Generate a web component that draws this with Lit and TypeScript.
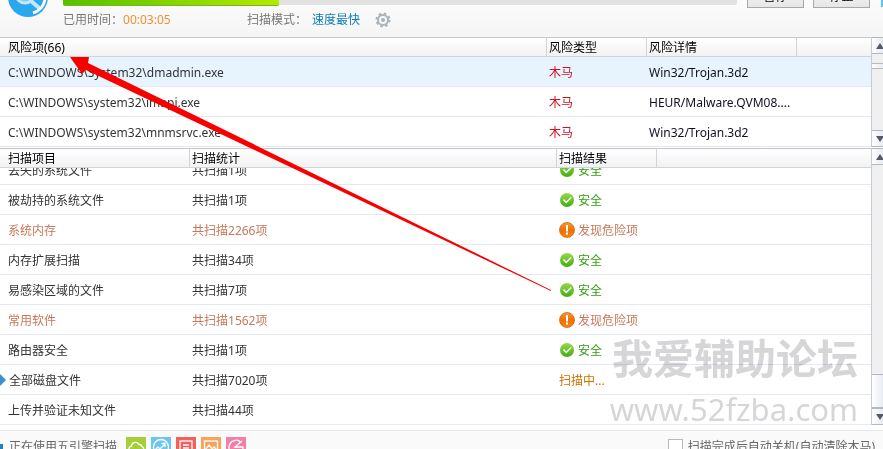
import { LitElement, html, svg, css, nothing } from "lit";
import { customElement, property } from "lit/decorators.js";
import { classMap } from "lit/directives/class-map.js";

type Result = "safe" | "danger" | "scanning";

interface Risk {
  path: string;
  kind: string;
  detail: string;
}

interface ScanItem {
  name: string;
  count: number;
  result?: Result;
}

const RISKS: Risk[] = [
  { path: "C:\\WINDOWS\\System32\\dmadmin.exe", kind: "木马", detail: "Win32/Trojan.3d2" },
  { path: "C:\\WINDOWS\\system32\\imapi.exe", kind: "木马", detail: "HEUR/Malware.QVM08...." },
  { path: "C:\\WINDOWS\\system32\\mnmsrvc.exe", kind: "木马", detail: "Win32/Trojan.3d2" },
];

const ITEMS: ScanItem[] = [
  { name: "丢失的系统文件", count: 1, result: "safe" },
  { name: "被劫持的系统文件", count: 1, result: "safe" },
  { name: "系统内存", count: 2266, result: "danger" },
  { name: "内存扩展扫描", count: 34, result: "safe" },
  { name: "易感染区域的文件", count: 7, result: "safe" },
  { name: "常用软件", count: 1562, result: "danger" },
  { name: "路由器安全", count: 1, result: "safe" },
  { name: "全部磁盘文件", count: 7020, result: "scanning" },
  { name: "上传并验证未知文件", count: 44 },
];

const ENGINES = [
  { color: "#a6ce39", glyph: svg`<path d="M5 16h10a3.500 3.500 0 0 0 1-6.500 3 3 0 0 0-3-2 4 4 0 0 0-7.500 1.500A3.700 3.700 0 0 0 5 16z"/>` },
  { color: "#6cc5f0", glyph: svg`<circle cx="10" cy="10" r="7.500"/><path d="M4 13l3-3 2 2 5-5M10.500 6.500H14V10"/>` },
  { color: "#f25f5c", glyph: svg`<rect x="4" y="4" width="12" height="13"/><path d="M7 8h6M7 11h6"/>` },
  { color: "#f7a35c", glyph: svg`<rect x="3.500" y="4" width="13" height="13"/><path d="M4 13l4-5 3 4 2-2 3 3"/>` },
  { color: "#f080a8", glyph: svg`<path d="M14 4.500A7 7 0 1 0 17 10H9L16 4"/>` },
];

const safeIcon = html`<svg class="mark" width="16" height="16" viewBox="0 0 16 16" aria-hidden="true">
  <defs>
    <linearGradient id="g" x1="0" y1="0" x2="0" y2="1"><stop offset="0" stop-color="#9bd84a" /><stop offset="1" stop-color="#3fae12" /></linearGradient>
  </defs>
  <circle cx="8" cy="8" r="7" fill="url(#g)" />
  <path d="M4.500 7.500l2.700 3 5-5" fill="none" stroke="#fff" stroke-width="1.500" />
</svg>`;

const dangerIcon = html`<svg class="mark" width="16" height="16" viewBox="0 0 16 16" aria-hidden="true">
  <defs>
    <linearGradient id="o" x1="0" y1="0" x2="0" y2="1"><stop offset="0" stop-color="#f59a3a" /><stop offset="0.500" stop-color="#ef7000" /><stop offset="1" stop-color="#f58a14" /></linearGradient>
  </defs>
  <circle cx="8" cy="8" r="7.500" fill="url(#o)" stroke="#d0660c" stroke-width="0.800" />
  <path d="M7 3h2v6.500H7zM7 10.500h2v2H7z" fill="#fff" />
</svg>`;

const font = css`
  "Noto Sans", "Noto Sans CJK SC", sans-serif
`;

@customElement("scroll-bar")
class ScrollBar extends LitElement {
  @property({ type: Boolean }) bottom = false;

  static styles = css`
    :host {
      display: flex;
      flex-direction: column;
      box-sizing: border-box;
      flex: none;
      width: 12px;
      overflow: hidden;
      background: #f0f0f0;
      border-left: 1px solid #c8ccd2;
    }
    .step {
      display: flex;
      justify-content: center;
      align-items: center;
      box-sizing: border-box;
      flex: none;
      width: 17px;
      height: 17px;
      padding: 0;
      border: 1px solid #b4b8bd;
      border-left: 0;
      background: linear-gradient(90deg, #fff, #dde2ec);
    }
    .gap {
      height: 9px;
    }
    .space {
      flex: 1;
    }
    .thumb {
      box-sizing: border-box;
      width: 17px;
      height: 6px;
      border: 1px solid #b4b8bd;
      border-left: 0;
      background: linear-gradient(90deg, #fff, #dde2ec);
    }
    .tall {
      height: 34px;
    }
  `;

  render() {
    const tall = this.bottom;
    return html`
      <button class="step" aria-label="向上滚动">
        <svg width="8" height="6" viewBox="0 0 8 6"><path d="M4 0l4 6H0z" fill="#555a66" /></svg>
      </button>
      <div class=${tall ? "space" : "gap"}></div>
      <div class=${classMap({ thumb: true, tall })}></div>
      ${tall ? nothing : html`<div class="space"></div>`}
      <button class="step" aria-label="向下滚动">
        <svg width="8" height="6" viewBox="0 0 8 6"><path d="M0 0h8L4 6z" fill="#555a66" /></svg>
      </button>
    `;
  }
}

@customElement("app-root")
class AppRoot extends LitElement {
  static styles = css`
    :host {
      display: flex;
      flex-direction: column;
      position: relative;
      height: 100vh;
      overflow: hidden;
      background: #fff;
      color: #333;
      font: 12px/18px ${font};
    }
    button,
    input {
      font: inherit;
    }
    .top {
      display: flex;
      align-items: flex-end;
      flex: none;
      box-sizing: border-box;
      height: 37px;
      background: linear-gradient(#fbfbfb, #f5f5f5);
    }
    .logo {
      flex: none;
      width: 40px;
      height: 40px;
      margin: 0 15px 20px 8px;
    }
    .progress {
      flex: 1;
      padding-bottom: 8px;
    }
    .track {
      height: 20px;
      margin-bottom: 6px;
      border-radius: 2px;
      background: #e1e1e1;
    }
    .fill {
      box-sizing: border-box;
      height: 21px;
      border-bottom: 1px solid #7db41c;
      border-radius: 2px;
      background: linear-gradient(90deg, #55c000, #b4ea00);
    }
    .info {
      display: flex;
      align-items: center;
      color: #777;
    }
    .time {
      color: #f09030;
      flex: none;
      width: 124px;
    }
    .mode {
      color: #0a7db5;
      text-decoration: none;
      margin-right: 15px;
      margin-left: 5px;
    }
    .gear {
      display: flex;
      padding: 0;
      border: 0;
      background: none;
    }
    .actions {
      display: flex;
      gap: 9px;
      padding: 0 11px 29px 10px;
    }
    .action {
      box-sizing: border-box;
      width: 57px;
      height: 23px;
      padding: 0;
      border: 1px solid #a8a8a8;
      background: linear-gradient(#fafafa, #e6e6e6);
      color: #000;
    }
    .edge {
      width: 2px;
      height: 20px;
      margin-bottom: 30px;
      background: #5cc4f5;
    }
    .pane {
      display: flex;
      flex: none;
    }
    .risks {
      padding-bottom: 1px;
    }
    table {
      flex: 1;
      width: 0;
      table-layout: fixed;
      border-collapse: separate;
      border-spacing: 0;
    }
    th,
    td {
      box-sizing: border-box;
      padding: 0 0 0 8px;
      text-align: left;
      white-space: nowrap;
      font-weight: normal;
    }
    th {
      height: 20px;
      padding-top: 2px;
      border-top: 1px solid #c4c8cc;
      border-bottom: 1px solid #ccd6de;
      background: linear-gradient(#fff, #f2f2f2);
      color: #000;
      line-height: 16px;
    }
    th + th {
      padding-left: 2px;
      border-left: 1px solid #d4d4d4;
    }
    td {
      height: 30px;
      border-bottom: 1px solid #e2e8f4;
    }
    td + td {
      padding-left: 3px;
    }
    .on td {
      background: #e8f4fd;
    }
    .kind {
      color: #d01020;
    }
    .detail {
      color: #101020;
    }
    .w-kind {
      width: 100px;
    }
    .w-detail {
      width: 150px;
    }
    .w-rest {
      width: 75px;
    }
    .w-name {
      width: 189px;
    }
    .w-last {
      width: 215px;
    }
    .cut td {
      height: 17px;
    }
    .cut .cell {
      height: 16px;
      align-items: flex-end;
      overflow: hidden;
    }
    .cell {
      display: flex;
      align-items: center;
      height: 29px;
    }
    .line {
      display: flex;
      align-items: center;
      flex: none;
      box-sizing: border-box;
      gap: 3px;
      height: 29px;
      padding-top: 2px;
    }
    .mark {
      margin-bottom: 2px;
    }
    .warn td {
      color: #c8785a;
    }
    .current td:first-child {
      padding-left: 0;
    }
    .safe {
      color: #2f9e0e;
    }
    .scanning {
      color: #d07000;
    }
    .bottom {
      display: flex;
      align-items: center;
      justify-content: space-between;
      flex: none;
      box-sizing: border-box;
      height: 32px;
      margin-top: 5px;
      padding: 0 8px 0 0;
      border-top: 1px solid #e6e6e6;
      background: #fafafa;
      color: #666;
    }
    .engines {
      display: flex;
      align-items: center;
      gap: 6px;
    }
    .tab {
      width: 3px;
      height: 6px;
      background: #1a86b8;
    }
    .label {
      margin-right: 3px;
    }
    .icons {
      display: flex;
      flex: none;
      gap: 5px;
    }
    .engine {
      display: block;
      width: 20px;
      height: 20px;
    }
    .option {
      display: flex;
      align-items: center;
      gap: 5px;
    }
    .box {
      appearance: none;
      box-sizing: border-box;
      width: 15px;
      height: 15px;
      margin: 0;
      border: 1px solid #b8b8b8;
      background: #fff;
    }
    .watermark {
      position: absolute;
      right: 25px;
      bottom: 14px;
      color: #d6d6d8;
      text-align: right;
      mix-blend-mode: multiply;
      pointer-events: none;
    }
    .forum {
      font: 700 41px/54px "Noto Sans CJK SC", sans-serif;
    }
    .site {
      font: 31px/52px "Noto Sans", sans-serif;
    }
    .arrow {
      position: absolute;
      top: 0;
      left: 0;
      pointer-events: none;
    }
  `;

  private result(item: ScanItem) {
    if (item.result === "safe") return html`<span class="line safe">${safeIcon}安全</span>`;
    if (item.result === "danger") return html`<span class="line">${dangerIcon}发现危险项</span>`;
    if (item.result === "scanning") return html`<span class="line scanning">扫描中...</span>`;
    return nothing;
  }

  private itemRow(item: ScanItem, index: number) {
    const current = item.result === "scanning";
    const classes = { cut: index === 0, warn: item.result === "danger", current };
    return html`<tr class=${classMap(classes)}>
      <td>
        <div class="cell"><span class="line">${current
          ? html`<svg class="mark" width="6" height="12" viewBox="0 0 6 12"><path d="M0 0l6 6-6 6z" fill="#3c8fd0" /></svg>`
          : nothing}${item.name}</span></div>
      </td>
      <td><div class="cell"><span class="line"><span>共扫描${item.count}项</span></span></div></td>
      <td><div class="cell">${this.result(item)}</div></td>
      <td></td>
    </tr>`;
  }

  render() {
    return html`
      <header class="top">
        <svg class="logo" viewBox="0 0 40 40" aria-hidden="true">
          <circle cx="20" cy="20" r="20" fill="#29a8ee" />
          <circle cx="17" cy="17" r="9" fill="#7cccf6" stroke="#c4e8fb" stroke-width="3" />
          <path d="M23 24l7 6" stroke="#c4e8fb" stroke-width="4" stroke-linecap="round" />
          <path d="M37 22a17 17 0 0 1-12 14" fill="none" stroke="#fff" stroke-width="3" />
        </svg>
        <div class="progress">
          <div class="track"><div class="fill" style="width:32%"></div></div>
          <div class="info">
            <span>已用时间：</span><span class="time">00:03:05</span>
            <span>扫描模式：</span><a class="mode" href="#">速度最快</a>
            <button class="gear" aria-label="设置">
              <svg width="16" height="16" viewBox="0 0 16 16" fill="none" stroke="#a9b3bb">
                <circle cx="8" cy="8" r="5" stroke-width="2" />
                <circle cx="8" cy="8" r="6.500" stroke-width="2" stroke-dasharray="2.500 2.605" />
                <circle cx="8" cy="8" r="2" fill="#a9b3bb" stroke="none" />
              </svg>
            </button>
          </div>
        </div>
        <div class="actions">
          <button class="action">暂停</button>
          <button class="action">停止</button>
        </div>
        <div class="edge"></div>
      </header>

      <section class="pane risks">
        <table>
          <thead>
            <tr>
              <th>风险项(66)</th>
              <th class="w-kind">风险类型</th>
              <th class="w-detail">风险详情</th>
              <th class="w-rest"></th>
            </tr>
          </thead>
          <tbody>
            ${RISKS.map(
              (r, i) => html`<tr class=${classMap({ on: i === 0 })}>
                <td><span class="line">${r.path}</span></td>
                <td class="kind"><span class="line">${r.kind}</span></td>
                <td class="detail"><span class="line">${r.detail}</span></td>
                <td></td>
              </tr>`
            )}
          </tbody>
        </table>
        <scroll-bar></scroll-bar>
      </section>

      <section class="pane">
        <table>
          <thead>
            <tr>
              <th class="w-name">扫描项目</th>
              <th>扫描统计</th>
              <th class="w-kind">扫描结果</th>
              <th class="w-last"></th>
            </tr>
          </thead>
          <tbody>
            ${ITEMS.map((item, i) => this.itemRow(item, i))}
          </tbody>
        </table>
        <scroll-bar bottom></scroll-bar>
      </section>

      <footer class="bottom">
        <div class="engines">
          <span class="tab"></span>
          <span class="label">正在使用五引擎扫描</span>
          <div class="icons">
            ${ENGINES.map(
              (e) => html`<svg class="engine" viewBox="0 0 20 20" fill="none" stroke="#fff" stroke-width="1.300" aria-hidden="true">
                <rect width="20" height="20" fill=${e.color} stroke="none" />${e.glyph}
              </svg>`
            )}
          </div>
        </div>
        <label class="option"><input class="box" type="checkbox" />扫描完成后自动关机(自动清除木马)</label>
      </footer>

      <div class="watermark">
        <div class="forum">我爱辅助论坛</div>
        <div class="site">www.52fzba.com</div>
      </div>
      <svg class="arrow" width="560" height="300" viewBox="0 0 560 300" aria-hidden="true">
        <path d="M70 57H89L88 63L551 290V291L86 70L82 74Z" fill="#f80000" />
      </svg>
    `;
  }
}
